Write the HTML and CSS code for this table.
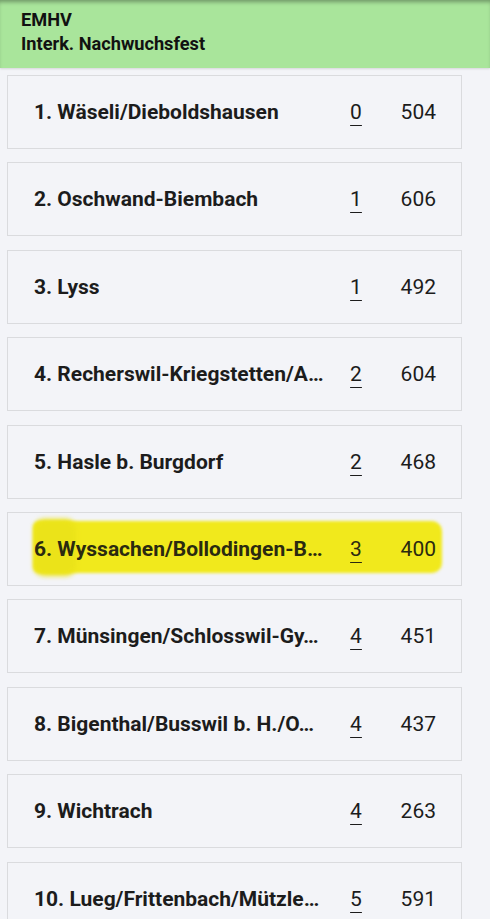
FILE: index.html
```html
<!DOCTYPE html>
<html lang="de">
<head>
    <meta charset="UTF-8">
    <meta name="viewport" content="width=device-width, initial-scale=1.0">
    <title>EMHV Rangliste</title>
    <link rel="stylesheet" href="styles.css">
</head>
<body>
    <header class="topbar">
        <div class="topbar-title">EMHV</div>
        <div class="topbar-title">Interk. Nachwuchsfest</div>
    </header>

    <main class="ranking">
        <div class="rank-card">
            <span class="rank-name">1. Wäseli/Dieboldshausen</span>
            <span class="rank-pos">0</span>
            <span class="rank-score">504</span>
        </div>
        <div class="rank-card">
            <span class="rank-name">2. Oschwand-Biembach</span>
            <span class="rank-pos">1</span>
            <span class="rank-score">606</span>
        </div>
        <div class="rank-card">
            <span class="rank-name">3. Lyss</span>
            <span class="rank-pos">1</span>
            <span class="rank-score">492</span>
        </div>
        <div class="rank-card">
            <span class="rank-name">4. Recherswil-Kriegstetten/A…</span>
            <span class="rank-pos">2</span>
            <span class="rank-score">604</span>
        </div>
        <div class="rank-card">
            <span class="rank-name">5. Hasle b. Burgdorf</span>
            <span class="rank-pos">2</span>
            <span class="rank-score">468</span>
        </div>
        <!-- Markierte Zeile (Leuchtstift) -->
        <div class="rank-card marked">
            <span class="marker"></span>
            <span class="marker-blob"></span>
            <span class="rank-name">6. Wyssachen/Bollodingen-B…</span>
            <span class="rank-pos">3</span>
            <span class="rank-score">400</span>
        </div>
        <div class="rank-card">
            <span class="rank-name">7. Münsingen/Schlosswil-Gy…</span>
            <span class="rank-pos">4</span>
            <span class="rank-score">451</span>
        </div>
        <div class="rank-card">
            <span class="rank-name">8. Bigenthal/Busswil b. H./O…</span>
            <span class="rank-pos">4</span>
            <span class="rank-score">437</span>
        </div>
        <div class="rank-card">
            <span class="rank-name">9. Wichtrach</span>
            <span class="rank-pos">4</span>
            <span class="rank-score">263</span>
        </div>
        <div class="rank-card">
            <span class="rank-name">10. Lueg/Frittenbach/Mützle…</span>
            <span class="rank-pos">5</span>
            <span class="rank-score">591</span>
        </div>
    </main>
</body>
</html>
```

FILE: styles.css
```css
body {
    margin: 0;
    font-family: Roboto, "Noto Sans", sans-serif;
    background-color: #f3f4f8;
    color: #1c1c1c;
    overflow: hidden;
}

.topbar {
    height: 68px;
    box-sizing: border-box;
    padding: 8px 21px 0 21px;
    background-color: #a9e59b;
    box-shadow: inset 0 4px 4px -2px rgba(0,0,0,0.35), 0 1px 2px rgba(0,0,0,0.12);
}

.topbar-title {
    font-size: 18.2px;
    line-height: 24px;
    font-weight: 700;
    color: #111111;
}

.ranking {
    padding: 7px 28px 0 7px;
    display: flex;
    flex-direction: column;
    gap: 13.4px;
}

.rank-card {
    position: relative;
    height: 74px;
    box-sizing: border-box;
    border: 1px solid #dadbde;
    padding: 0 25px 0 26px;
    display: grid;
    grid-template-columns: 1fr 40px 60px;
    align-items: center;
    font-size: 21px;
}

.rank-name {
    font-weight: 700;
    white-space: nowrap;
    overflow: hidden;
    text-overflow: ellipsis;
    position: relative;
}

.rank-pos {
    justify-self: center;
    text-decoration: underline;
    text-decoration-thickness: 1px;
    text-underline-offset: 6px;
    position: relative;
}

.rank-score {
    justify-self: end;
    position: relative;
}

/* Leuchtstift-Markierung */
.marker {
    position: absolute;
    left: 25px;
    top: 8px;
    width: 409px;
    height: 52px;
    background-color: #f1e91c;
    border-radius: 6px 10px 10px 6px;
    filter: blur(1.5px);
}

.marker-blob {
    position: absolute;
    left: 26px;
    top: 6px;
    width: 42px;
    height: 57px;
    background-color: #ebe319;
    border-radius: 10px;
    filter: blur(2.5px);
}

.marked .rank-name,
.marked .rank-pos,
.marked .rank-score {
    color: #2a2a10;
}
```
